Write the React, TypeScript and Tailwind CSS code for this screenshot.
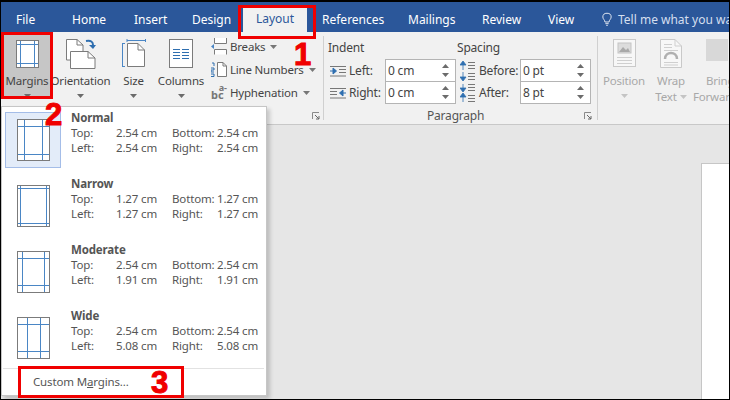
import React from "react";

const Caret = ({ color = "#6b6b6b", up = false }: { color?: string; up?: boolean }) => (
  <svg width="7" height="4" viewBox="0 0 7 4" className="shrink-0">
    <path d={up ? "M3.5 0L7 4H0Z" : "M0 0H7L3.5 4Z"} fill={color} />
  </svg>
);

const MarginIcon = ({ w, h, xs, ys }: { w: number; h: number; xs: number[]; ys: number[] }) => (
  <svg width={w + 1} height={h + 1} viewBox={`0 0 ${w + 1} ${h + 1}`} className="shrink-0">
    <rect x="0.5" y="0.5" width={w} height={h} fill="#fff" stroke="#7b7b7b" />
    {xs.map((x) => (
      <path key={`x${x}`} d={`M${x + 0.5} 1V${h}`} stroke="#4a86c5" />
    ))}
    {ys.map((y) => (
      <path key={`y${y}`} d={`M1 ${y + 0.5}H${w}`} stroke="#4a86c5" />
    ))}
  </svg>
);

const Launcher = () => (
  <svg width="8" height="8" viewBox="0 0 8 8" className="shrink-0">
    <path d="M0.5 7V0.5H7" stroke="#8a8a8a" fill="none" />
    <path d="M3 3L7 7M7 4V7H4" stroke="#666" fill="none" />
  </svg>
);

const OrientationIcon = () => (
  <svg width="30" height="30" viewBox="0 0 30 30">
    <path d="M.5.5H11L17 6V21H.5Z" fill="#fff" stroke="#7b7b7b" />
    <path d="M11 .5V6H17" fill="none" stroke="#7b7b7b" />
    <path d="M4.5 12.5H22L29 19V29.5H4.5Z" fill="#fff" stroke="#7b7b7b" />
    <path d="M22 12.5V19H29" fill="none" stroke="#7b7b7b" />
    <path d="M20 2C25 1 27 3 27 6" fill="none" stroke="#2f6fb0" strokeWidth="2" />
    <path d="M23 6H30L27 10Z" fill="#2f6fb0" />
  </svg>
);

const SizeIcon = () => (
  <svg width="24" height="29" viewBox="0 0 24 29">
    <path d="M5 1.5H24M5 0V3M23.5 0V3M.5 4V28M0 4.5H3M0 27.5H3" stroke="#4a86c5" fill="none" />
    <path d="M5.5 4.5H16L22.5 11V27.5H5.5Z" fill="#fff" stroke="#7b7b7b" />
    <path d="M16 4.5V11H22.5" fill="none" stroke="#7b7b7b" />
  </svg>
);

const ColumnsIcon = () => (
  <svg width="24" height="29" viewBox="0 0 24 29">
    <rect x=".5" y=".5" width="23" height="28" fill="#fff" stroke="#7b7b7b" />
    <path d="M4 10.5H11M13 10.5H20M4 13.5H11M13 13.5H20M4 16.5H11M13 16.5H20M4 19.5H11M13 19.5H20" stroke="#2f6fb0" />
  </svg>
);

const BreaksIcon = () => (
  <svg width="16" height="17" viewBox="0 0 16 17">
    <path d="M3.5 0V5.5H15.5V0M3.5 16.5V11.5H15.5V16.5" fill="#fff" stroke="#7b7b7b" />
    <path d="M0 8.5L3 6V11Z" fill="#4a86c5" />
  </svg>
);

const LineNumbersIcon = () => (
  <svg width="16" height="15" viewBox="0 0 16 15">
    <path d="M6.5 .5H12L15.5 4V14.5H6.5Z" fill="#fff" stroke="#7b7b7b" />
    <path d="M12 .5V4H15.5" fill="none" stroke="#7b7b7b" />
    <path d="M1 1H3V4M0 6H3V8H0V10H3M0 12H3V14.5H0" fill="none" stroke="#2f6fb0" />
  </svg>
);

const IndentIcon = ({ right = false }: { right?: boolean }) => (
  <svg width="16" height="11" viewBox="0 0 16 11">
    {right ? (
      <>
        <path d="M0 .5H16M0 3.5H7M0 6.5H7M0 10H16" stroke="#777" fill="none" />
        <path d="M16 5H11M13 2L9.5 5L13 8Z" stroke="#2f6fb0" fill="#2f6fb0" />
      </>
    ) : (
      <>
        <path d="M0 .5H16M9 3.5H16M9 6.5H16M0 10H16" stroke="#777" fill="none" />
        <path d="M0 5H5M3 2L6.5 5L3 8Z" stroke="#2f6fb0" fill="#2f6fb0" />
      </>
    )}
  </svg>
);

const SpacingIcon = ({ after = false }: { after?: boolean }) => (
  <svg width="15" height="20" viewBox="0 0 15 20">
    {after ? (
      <path d="M3 1V7M0 5H6L3 9ZM3 19V12M0 14H6L3 10Z" stroke="#2f6fb0" strokeWidth=".8" fill="#2f6fb0" />
    ) : (
      <path d="M3 9V2M0 4H6L3 0ZM3 11V18M0 16H6L3 20Z" stroke="#2f6fb0" strokeWidth=".8" fill="#2f6fb0" />
    )}
    <path d="M8 1.5H15M8 4.5H15M8 7.5H15M8 12.5H15M8 15.5H15M8 18.5H15" stroke="#777" />
  </svg>
);

const PositionIcon = () => (
  <svg width="23" height="28" viewBox="0 0 23 28">
    <rect x=".5" y=".5" width="22" height="27" fill="#f7f7f7" stroke="#c9c9c9" />
    <rect x="5" y="4" width="13" height="10" fill="#dcdcdc" stroke="#c4c4c4" />
    <path d="M6 13L10 8L13 11L15 9L17 13Z" fill="#a9a9a9" />
    <path d="M4 18.5H19M4 21.5H19M4 24.5H19" stroke="#cfcfcf" />
  </svg>
);

const WrapIcon = () => (
  <svg width="22" height="29" viewBox="0 0 22 29">
    <path d="M.5.5H15L21.5 7V28.5H.5Z" fill="#f7f7f7" stroke="#c9c9c9" />
    <path d="M15 .5V7H21.5M4 5.5H12M4 8.5H12M4 11.5H18M4 23.5H18M4 26H18" fill="none" stroke="#cfcfcf" />
    <path d="M5 20C5 12 17 12 17 20" fill="none" stroke="#b0b0b0" strokeWidth="2.5" />
  </svg>
);

const LargeButton = ({ label, icon, className, iconBox = "h-[34px]" }: {
  label: string;
  icon: React.ReactNode;
  className: string;
  iconBox?: string;
}) => (
  <div className={`flex shrink-0 flex-col items-center text-[11.5px] leading-[16px] tracking-[-0.2px] text-[#444] ${className}`}>
    <div className={`flex items-start ${iconBox}`}>{icon}</div>
    <span className="whitespace-nowrap">{label}</span>
    <div className="mt-[5px]">
      <Caret />
    </div>
  </div>
);

const SmallButton = ({ label, icon }: { label: string; icon: React.ReactNode }) => (
  <div className="flex h-[23px] items-center text-[11.5px] tracking-[-0.2px] text-[#444]">
    <div className="flex w-[19px] shrink-0 items-center">{icon}</div>
    <span className="whitespace-nowrap">{label}</span>
    <div className="ml-[5px]">
      <Caret color="#777" />
    </div>
  </div>
);

const Spinner = ({ value }: { value: string }) => (
  <div className="-mt-px flex h-[23px] w-[71px] items-center justify-between border border-[#b4b4b4] bg-white pl-[2px] pr-[6px] text-[12px] tracking-[-0.2px] text-[#444]">
    <span>{value}</span>
    <div className="flex flex-col gap-[5px]">
      <Caret up />
      <Caret />
    </div>
  </div>
);

const presets = [
  { name: "Normal", top: "2.54 cm", bottom: "2.54 cm", left: "2.54 cm", right: "2.54 cm", xs: [7, 25], ys: [7, 35] },
  { name: "Narrow", top: "1.27 cm", bottom: "1.27 cm", left: "1.27 cm", right: "1.27 cm", xs: [3, 29], ys: [3, 38] },
  { name: "Moderate", top: "2.54 cm", bottom: "2.54 cm", left: "1.91 cm", right: "1.91 cm", xs: [5, 27], ys: [7, 34] },
  { name: "Wide", top: "2.54 cm", bottom: "2.54 cm", left: "5.08 cm", right: "5.08 cm", xs: [10, 23], ys: [7, 34] },
];

const MarginsMenu = () => (
  <div className="absolute left-0 top-[104px] z-10 flex h-[290px] w-[266px] flex-col border border-[#c6c6c6] bg-white pl-[3px] pt-[5px] text-[11.5px] leading-[15px] tracking-[-0.15px] text-[#555] shadow-[3px_3px_4px_rgba(0,0,0,0.18)]">
    {presets.map((p, i) => (
      <div key={p.name} className="flex h-[66px] shrink-0">
        <div
          className={`flex h-[56px] w-[56px] shrink-0 items-center justify-center border ${
            i === 0 ? "border-[#a4bde8] bg-[#e3ecf9]" : "border-transparent"
          }`}
        >
          <MarginIcon w={32} h={41} xs={p.xs} ys={p.ys} />
        </div>
        <div className="-mt-[2px] ml-[10px] grid h-[45px] grid-cols-[45px_56px_45px_1fr] grid-rows-[15px_15px_15px]">
          <span className="col-span-4 font-bold text-[#555]">{p.name}</span>
          <span>Top:</span>
          <span>{p.top}</span>
          <span>Bottom:</span>
          <span>{p.bottom}</span>
          <span>Left:</span>
          <span>{p.left}</span>
          <span>Right:</span>
          <span>{p.right}</span>
        </div>
      </div>
    ))}
    <div className="-ml-[2px] mr-[2px] mt-[-8px] border-t border-[#e2e2e2] pl-[30px] pt-[5px] text-[11.5px] leading-[16px]">
      <span>
        Custom M<span className="underline">a</span>rgins...
      </span>
    </div>
  </div>
);

const tabs = [
  { label: "File", cls: "ml-[15px] w-[56px] pt-[5px] text-white" },
  { label: "Home", cls: "w-[62px] pt-[5px] text-white" },
  { label: "Insert", cls: "w-[58px] pt-[5px] text-white" },
  { label: "Design", cls: "w-[51px] pt-[5px] text-white" },
  { label: "Layout", cls: "w-[64px] self-end h-[26px] flex items-center justify-center bg-[#f1f1f1] text-[#2b579a]" },
  { label: "References", cls: "ml-[15px] w-[86px] pt-[5px] text-white" },
  { label: "Mailings", cls: "w-[74px] pt-[5px] text-white" },
  { label: "Review", cls: "w-[66px] pt-[5px] text-white" },
  { label: "View", cls: "w-[54px] pt-[5px] text-white" },
];

export default function App() {
  return (
    <div className="relative flex h-[400px] w-[730px] flex-col overflow-hidden border border-t-2 border-black bg-[#e6e6e6] font-['Noto_Sans',sans-serif]">
      <div className="flex h-[30px] shrink-0 items-center bg-[#2b579a] text-[12px]">
        {tabs.map((t) => (
          <div key={t.label} className={`shrink-0 ${t.cls}`}>
            {t.label}
          </div>
        ))}
        <svg width="10" height="15" viewBox="0 0 12 16" className="mr-[6px] mt-[5px] shrink-0" fill="none" stroke="#fff">
          <path d="M3.5 11C3.5 8.5 1 7.5 1 5A5 4.5 0 0 1 11 5C11 7.5 8.5 8.5 8.5 11ZM4 13H8M5 15H7" />
        </svg>
        <span className="whitespace-nowrap pt-[5px] text-[#d5dfef]">Tell me what you wan</span>
      </div>

      <div className="flex h-[93px] shrink-0 border-b border-[#c8c8c8] bg-[#f1f1f1]">
        <div className="flex w-[322px] shrink-0 flex-col">
          <div className="flex h-[78px] pt-[7px]">
            <LargeButton
              label="Margins"
              className="-mt-[7px] ml-[2px] h-[66px] w-[48px] bg-[#c6c6c6] pt-[8px]"
              iconBox="h-[33px]"
              icon={<MarginIcon w={22} h={27} xs={[4, 18]} ys={[4, 23]} />}
            />
            <LargeButton label="Orientation" className="w-[59px]" icon={<OrientationIcon />} />
            <LargeButton label="Size" className="w-[47px]" icon={<SizeIcon />} />
            <LargeButton label="Columns" className="w-[48px]" icon={<ColumnsIcon />} />
            <div className="-mt-[4px] ml-[6px] flex flex-col">
              <SmallButton label="Breaks" icon={<BreaksIcon />} />
              <SmallButton label="Line Numbers" icon={<LineNumbersIcon />} />
              <SmallButton
                label="Hyphenation"
                icon={
                  <span className="-mt-[4px] flex w-[16px] flex-col font-bold leading-[7px] tracking-normal text-[#777]">
                    <span className="self-end text-[9px]">a-</span>
                    <span className="text-[11px]">bc</span>
                  </span>
                }
              />
            </div>
          </div>
          <div className="flex justify-end pr-[3px] pt-[2px]">
            <Launcher />
          </div>
        </div>

        <div className="my-[4px] w-px shrink-0 bg-[#d0d0d0]" />

        <div className="flex w-[273px] shrink-0 flex-col pl-[4px] pt-[7px] text-[12px] tracking-[-0.2px] text-[#444]">
          <div className="flex h-[66px]">
            <div className="w-[129px] shrink-0">
              <div className="h-[18px] leading-[18px]">Indent</div>
              <div className="mt-[3px] flex h-[22px] items-center">
                <div className="ml-[2px] w-[19px]"><IndentIcon /></div>
                <span className="w-[36px]">Left:</span>
                <Spinner value="0 cm" />
              </div>
              <div className="flex h-[22px] items-center">
                <div className="ml-[2px] w-[19px]"><IndentIcon right /></div>
                <span className="w-[36px]">Right:</span>
                <Spinner value="0 cm" />
              </div>
            </div>
            <div className="w-[135px] shrink-0">
              <div className="h-[18px] leading-[18px]">Spacing</div>
              <div className="mt-[3px] flex h-[22px] items-center">
                <div className="ml-[3px] w-[19px]"><SpacingIcon /></div>
                <span className="w-[41px]">Before:</span>
                <Spinner value="0 pt" />
              </div>
              <div className="flex h-[22px] items-center">
                <div className="ml-[3px] w-[19px]"><SpacingIcon after /></div>
                <span className="w-[41px]">After:</span>
                <Spinner value="8 pt" />
              </div>
            </div>
          </div>
          <div className="mt-[4px] flex items-center justify-between pr-[5px]">
            <span className="ml-[99px] leading-[16px] text-[#555]">Paragraph</span>
            <Launcher />
          </div>
        </div>

        <div className="my-[4px] w-px shrink-0 bg-[#d0d0d0]" />

        <div className="flex min-w-0 flex-1 overflow-hidden pt-[7px] text-[11.5px] leading-[16px] tracking-[-0.2px] text-[#a8a8a8]">
          <div className="ml-[4px] flex w-[44px] shrink-0 flex-col items-center">
            <div className="h-[34px]"><PositionIcon /></div>
            <span>Position</span>
            <div className="mt-[5px]"><Caret color="#c4c4c4" /></div>
          </div>
          <div className="ml-[9px] flex w-[32px] shrink-0 flex-col items-center">
            <div className="h-[34px]"><WrapIcon /></div>
            <span>Wrap</span>
            <span className="flex items-center gap-[3px] whitespace-nowrap">
              Text <Caret color="#c4c4c4" />
            </span>
          </div>
          <div className="ml-[6px] flex shrink-0 flex-col items-start">
            <div className="ml-[13px] h-[34px]">
              <div className="h-[22px] w-[22px] bg-[#d8d8d8]" />
            </div>
            <span className="ml-[13px]">Bring</span>
            <span>Forward</span>
          </div>
        </div>
      </div>

      <div className="flex flex-1 justify-end pt-[38px]">
        <div className="w-[28px] border-l border-t border-[#c6c6c6] bg-white" />
      </div>

      <MarginsMenu />

      {/* red callouts from the tutorial */}
      <div className="absolute left-[237px] top-[3px] z-20 h-[34px] w-[78px] border-[3px] border-[#f00000]" />
      <div className="absolute left-0 top-[30px] z-20 h-[67px] w-[52px] border-[3px] border-[#f00000]" />
      <div className="absolute left-[17px] top-[364px] z-20 h-[32px] w-[166px] border-[3px] border-[#f00000]" />
      <span className="absolute left-[293px] top-[36px] z-20 font-['Liberation_Sans',sans-serif] text-[31px] font-bold leading-[34px] text-[#f00000] [-webkit-text-stroke:1px_#f00000]">1</span>
      <span className="absolute left-[44px] top-[96px] z-20 font-['Liberation_Sans',sans-serif] text-[31px] font-bold leading-[34px] text-[#f00000] [-webkit-text-stroke:1px_#f00000]">2</span>
      <span className="absolute left-[150px] top-[364px] z-20 font-['Liberation_Sans',sans-serif] text-[31px] font-bold leading-[34px] text-[#f00000] [-webkit-text-stroke:1px_#f00000]">3</span>
    </div>
  );
}
